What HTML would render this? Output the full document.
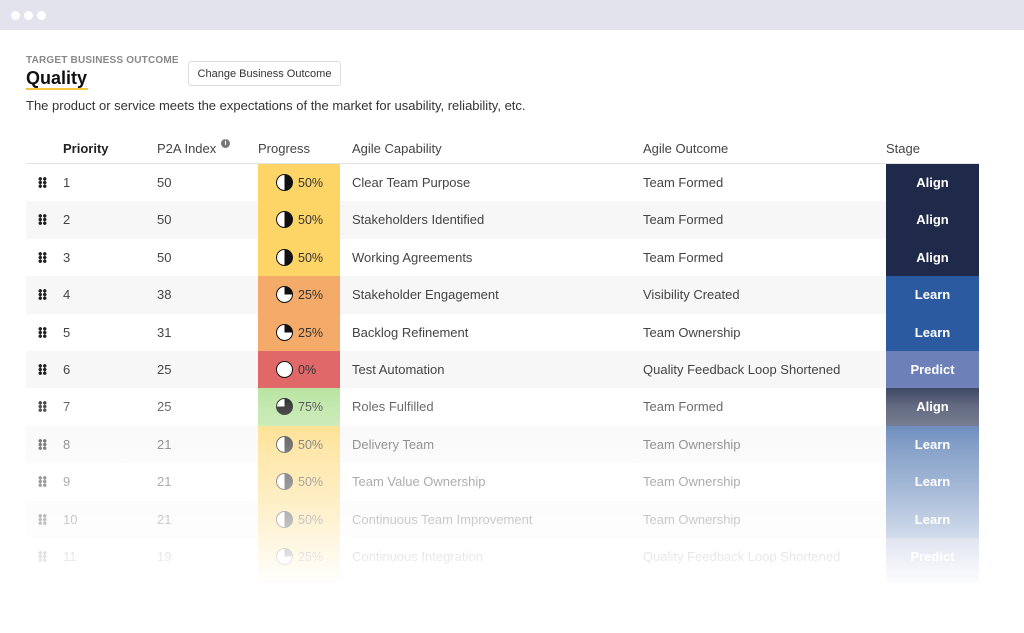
<!DOCTYPE html>
<html><head><meta charset="utf-8"><style>
*{margin:0;padding:0;box-sizing:border-box}
body{width:1024px;height:633px;background:#fff;font-family:"Liberation Sans",sans-serif;position:relative;overflow:hidden;color:#444}
.top{position:absolute;left:0;top:0;width:1024px;height:30px;background:#e3e3ed}
.dot{position:absolute;top:11px;width:9px;height:9px;border-radius:50%;background:#fff}
.abs{position:absolute;white-space:nowrap}
.row{position:absolute;left:26px;width:860px;height:37.4px}
.row.alt{background:#f7f7f7}
.cell{position:absolute;top:0;height:37.4px;line-height:37.4px;font-size:13px;color:#444}
.grip{position:absolute;left:12px;top:13px;width:9px;height:11px;background:
radial-gradient(circle,#222 1.6px,transparent 1.9px) 0 0/4.5px 3.7px}
.prog{position:absolute;left:258px;width:82px;height:37.4px}
.pie{position:absolute;left:18px;top:10px;width:17px;height:17px;border-radius:50%;border:1.5px solid #111}
.pct{position:absolute;left:40px;top:1px;line-height:37.4px;font-size:12.5px;color:#333}
.stage{position:absolute;left:886px;width:93px;height:37.4px;line-height:37.4px;text-align:center;color:#fff;font-weight:bold;font-size:13px}
.fade{position:absolute;left:0;top:385px;width:1024px;height:248px;background:linear-gradient(to bottom,rgba(255,255,255,0) 0,rgba(255,255,255,.2) 20px,rgba(255,255,255,.42) 60px,rgba(255,255,255,.6) 110px,rgba(255,255,255,.82) 160px,#fff 200px)}
</style></head><body>
<div class="top"></div>
<div class="dot" style="left:11px"></div><div class="dot" style="left:24px"></div><div class="dot" style="left:37px"></div>

<div class="abs" style="left:26px;top:55px;font-size:10px;font-weight:bold;color:#888;letter-spacing:.2px">TARGET BUSINESS OUTCOME</div>
<div class="abs" style="left:26px;top:68px;font-size:18px;font-weight:bold;color:#111">Quality</div>
<div class="abs" style="left:26px;top:88px;width:62px;height:2px;background:#f5c542"></div>
<div class="abs" style="left:188px;top:61px;width:153px;height:25px;border:1px solid #ddd;border-radius:3px;font-size:11px;line-height:24px;text-align:center;color:#333">Change Business Outcome</div>
<div class="abs" style="left:26px;top:98px;font-size:13px;color:#333">The product or service meets the expectations of the market for usability, reliability, etc.</div>

<div class="abs" style="left:63px;top:141px;font-size:13px;font-weight:bold;color:#222">Priority</div>
<div class="abs" style="left:157px;top:141px;font-size:13px;color:#444">P2A Index</div>
<div class="abs" style="left:221px;top:139px;width:9px;height:9px;border-radius:50%;background:#777;color:#fff;font-size:7px;line-height:9px;text-align:center;font-weight:bold">i</div>
<div class="abs" style="left:258px;top:141px;font-size:13px;color:#444">Progress</div>
<div class="abs" style="left:352px;top:141px;font-size:13px;color:#444">Agile Capability</div>
<div class="abs" style="left:643px;top:141px;font-size:13px;color:#444">Agile Outcome</div>
<div class="abs" style="left:886px;top:141px;font-size:13px;color:#444">Stage</div>
<div class="abs" style="left:26px;top:163px;width:953px;height:1px;background:#e2e2e2"></div>

<div id="rows"></div>
<script>
var d=[
[1,50,50,'#fdd466','Clear Team Purpose','Team Formed','Align'],
[2,50,50,'#fdd466','Stakeholders Identified','Team Formed','Align'],
[3,50,50,'#fdd466','Working Agreements','Team Formed','Align'],
[4,38,25,'#f4aa68','Stakeholder Engagement','Visibility Created','Learn'],
[5,31,25,'#f4aa68','Backlog Refinement','Team Ownership','Learn'],
[6,25,0,'#e06868','Test Automation','Quality Feedback Loop Shortened','Predict'],
[7,25,75,'#b5e39c','Roles Fulfilled','Team Formed','Align'],
[8,21,50,'#fdd466','Delivery Team','Team Ownership','Learn'],
[9,21,50,'#fdd466','Team Value Ownership','Team Ownership','Learn'],
[10,21,50,'#fdd466','Continuous Team Improvement','Team Ownership','Learn'],
[11,19,25,'#fdd466','Continuous Integration','Quality Feedback Loop Shortened','Predict'],
[12,19,25,'#fdd466','','','Learn']];
var sc={Align:'#1f2a4a',Learn:'#2b5aa0',Predict:'#6e80b8'};
var h='';
d.forEach(function(r,i){
var y=164+i*37.4;
h+='<div class="row'+(i%2?' alt':'')+'" style="top:'+y+'px"><div class="grip"></div><div class="cell" style="left:37px">'+r[0]+'</div><div class="cell" style="left:131px">'+r[1]+'</div><div class="cell" style="left:326px">'+r[4]+'</div><div class="cell" style="left:617px">'+r[5]+'</div></div>';
h+='<div class="prog" style="top:'+y+'px;background:'+r[3]+'"><div class="pie" style="background:conic-gradient(#111 0 '+r[2]+'%,#fff '+r[2]+'% 100%)"></div><div class="pct">'+r[2]+'%</div></div>';
var c=sc[r[6]];if(i==6)c='#3a4360';
h+='<div class="stage" style="top:'+y+'px;background:'+c+'">'+r[6]+'</div>';
});
document.getElementById('rows').innerHTML=h;
</script>
<div class="fade"></div>
</body></html>
